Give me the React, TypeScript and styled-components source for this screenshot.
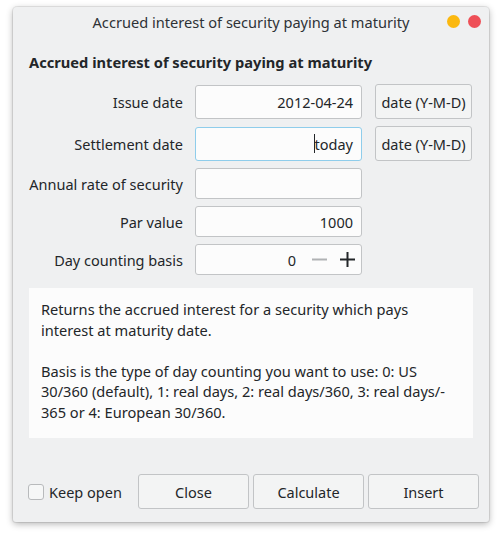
import React from 'react'
import styled, { createGlobalStyle } from 'styled-components'

const GlobalStyle = createGlobalStyle`
  html, body {
    margin: 0;
    padding: 0;
    background: #ffffff;
  }
  body {
    font-family: "Noto Sans", "DejaVu Sans", sans-serif;
    font-size: 14.5px;
    color: #232629;
  }
`

const Screen = styled.div`
  padding: 7px 13px 13px 13px;
`

const Window = styled.div`
  width: 476px;
  height: 515px;
  background: #eff0f1;
  border-radius: 4px 4px 3px 3px;
  box-shadow: 0 0 0 1px rgba(0, 0, 0, 0.08), 0 2px 7px rgba(0, 0, 0, 0.3);
  display: flex;
  flex-direction: column;
  box-sizing: border-box;
`

const TitleBar = styled.div`
  height: 30px;
  display: flex;
  align-items: center;
  justify-content: center;
  position: relative;
  font-size: 14.6px;
  color: #2e3236;
`

const Dots = styled.div`
  position: absolute;
  right: 8px;
  top: 8px;
  display: flex;
  gap: 8px;
`

const Dot = styled.span<{ $color: string }>`
  width: 13px;
  height: 13px;
  border-radius: 50%;
  background: ${p => p.$color};
`

const Body = styled.div`
  flex: 1;
  display: flex;
  flex-direction: column;
  padding: 15px 16px 0 16px;
`

const Heading = styled.div`
  font-weight: bold;
  font-size: 14.67px;
  margin-bottom: 12px;
`

const Form = styled.div`
  display: grid;
  grid-template-columns: 154px 167px 98px;
  column-gap: 12px;
  row-gap: 7px;
  align-items: center;
`

const Label = styled.label`
  text-align: right;
  white-space: nowrap;
`

const Field = styled.div<{ $tall?: boolean; $focused?: boolean }>`
  height: ${p => (p.$tall ? 34 : 31)}px;
  box-sizing: border-box;
  background: #fcfcfc;
  border: 1px solid ${p => (p.$focused ? '#8fcdeb' : '#c2c4c6')};
  border-radius: 3px;
  display: flex;
  align-items: center;
  justify-content: flex-end;
  padding: 0 8px;
`

const SpinField = styled(Field)`
  padding-right: 6px;
`

const Caret = styled.span`
  width: 1px;
  height: 19px;
  background: #232629;
`

const SpinValue = styled.span`
  margin-right: 16px;
`

const SpinIcon = styled.svg<{ $gap?: number }>`
  display: block;
  margin-left: ${p => p.$gap ?? 0}px;
`

const DateButton = styled.button`
  height: 35px;
  margin-left: 1px;
  box-sizing: border-box;
  background: #f3f4f4;
  border: 1px solid #c2c4c6;
  border-radius: 3px;
  font-family: inherit;
  font-size: 14.5px;
  color: #232629;
  padding: 0;
`

const InfoBox = styled.div`
  margin-top: 13px;
  background: #fcfcfc;
  padding: 11px 12px;
  height: 150px;
  box-sizing: border-box;
  font-size: 14.6px;
  line-height: 20.6px;

  p {
    margin: 0;
  }
  p + p {
    margin-top: 20.6px;
  }
`

const Footer = styled.div`
  margin-top: auto;
  display: flex;
  align-items: center;
  padding: 0 10px 13px 15px;
`

const CheckLabel = styled.label`
  display: flex;
  align-items: center;
  gap: 5px;
  width: 110px;
`

const Box = styled.span`
  width: 16px;
  height: 16px;
  box-sizing: border-box;
  border: 1px solid #b8babc;
  border-radius: 3px;
  background: #f6f7f7;
`

const FooterButtons = styled.div`
  display: grid;
  grid-template-columns: 111px 111px 111px;
  column-gap: 4px;
`

const PushButton = styled.button`
  height: 35px;
  box-sizing: border-box;
  background: #f3f4f4;
  border: 1px solid #c2c4c6;
  border-radius: 3px;
  font-family: inherit;
  font-size: 14.5px;
  color: #232629;
`

export default function App() {
  return (
    <Screen>
      <GlobalStyle />
      <Window>
        <TitleBar>
          Accrued interest of security paying at maturity
          <Dots>
            <Dot $color="#fbb80f" />
            <Dot $color="#ee4f57" />
          </Dots>
        </TitleBar>
        <Body>
          <Heading>Accrued interest of security paying at maturity</Heading>
          <Form>
            <Label>Issue date</Label>
            <Field $tall>2012-04-24</Field>
            <DateButton>date (Y-M-D)</DateButton>

            <Label>Settlement date</Label>
            <Field $tall $focused><Caret />today</Field>
            <DateButton>date (Y-M-D)</DateButton>

            <Label>Annual rate of security</Label>
            <Field />
            <span />

            <Label>Par value</Label>
            <Field>1000</Field>
            <span />

            <Label>Day counting basis</Label>
            <SpinField>
              <SpinValue>0</SpinValue>
              <SpinIcon width="15" height="15" viewBox="0 0 15 15">
                <path d="M0 7.5h15" stroke="#b0b2b4" strokeWidth="2" />
              </SpinIcon>
              <SpinIcon width="15" height="15" viewBox="0 0 15 15" $gap={13}>
                <path d="M0 7.5h15M7.5 0v15" stroke="#232629" strokeWidth="2" />
              </SpinIcon>
            </SpinField>
            <span />
          </Form>
          <InfoBox>
            <p>Returns the accrued interest for a security which pays interest at maturity date.</p>
            <p>Basis is the type of day counting you want to use: 0: US 30/360 (default), 1: real days, 2: real days/360, 3: real days/-{'\u200B'}365 or 4: European 30/360.</p>
          </InfoBox>
        </Body>
        <Footer>
          <CheckLabel><Box />Keep open</CheckLabel>
          <FooterButtons>
            <PushButton>Close</PushButton>
            <PushButton>Calculate</PushButton>
            <PushButton>Insert</PushButton>
          </FooterButtons>
        </Footer>
      </Window>
    </Screen>
  )
}
